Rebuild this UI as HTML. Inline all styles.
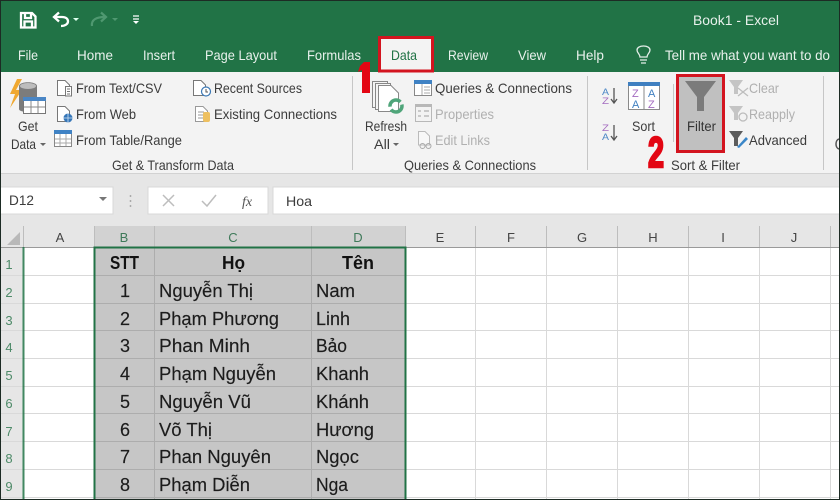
<!DOCTYPE html>
<html>
<head>
<meta charset="utf-8">
<style>
html,body{margin:0;padding:0;background:#fff;width:840px;height:500px;overflow:hidden}
svg{display:block;filter:blur(.35px)}
text{font-family:"Liberation Sans",sans-serif}
.r{font-size:14px;fill:#3c3c3c}
.d{font-size:14px;fill:#b0b0b0}
.t{font-size:14px;fill:#e8f1ec}
.c{font-size:18px;fill:#1c1c1c;stroke:#1c1c1c;stroke-width:.15}
.b{font-size:18px;fill:#111;font-weight:bold}
.h{font-size:13px;fill:#444}
.g{font-size:13px;fill:#3f7a5a}
.n{font-size:13px;fill:#4d8a68}
.a{font-size:43px;font-weight:bold;fill:#e30613;stroke:#e30613;stroke-width:2.400}
</style>
</head>
<body>
<svg width="840" height="500" viewBox="0 0 840 500" xmlns="http://www.w3.org/2000/svg">
<rect width="840" height="500" fill="#fff"/>
<!-- title and tab bar -->
<rect width="840" height="72" fill="#217346"/>
<!-- QAT -->
<g fill="none" stroke="#fff" stroke-width="2.300">
<path d="M21 13H32L35.500 16.500V27.500H21Z"/>
<path d="M25 14V18H31V14M24.500 27V21.500H32V27"/>
<path d="M55 17H62C66 17 68 19 68 21.500C68 24 65 26 61 26"/>
<path d="M59 12.500L54 17L59 21.500"/>
</g>
<path d="M73 18h6l-3 3z" fill="#dfe"/>
<g fill="none" stroke="#4f9870" stroke-width="2.200">
<path d="M92 26C91 20 96 17 105 17"/>
<path d="M101 12.500L106 17L101 21.500"/>
</g>
<path d="M112 18h6l-3 3z" fill="#4f9870"/>
<path d="M133 16h6M133 19h6" stroke="#fff" stroke-width="1.200"/><path d="M133 21h6l-3 3z" fill="#fff"/>
<text class="t" x="693" y="25" textLength="86" lengthAdjust="spacingAndGlyphs">Book1  -  Excel</text>
<!-- tabs -->
<text class="t" x="18" y="60" textLength="20" lengthAdjust="spacingAndGlyphs">File</text>
<text class="t" x="77" y="60" textLength="36" lengthAdjust="spacingAndGlyphs">Home</text>
<text class="t" x="143" y="60" textLength="32" lengthAdjust="spacingAndGlyphs">Insert</text>
<text class="t" x="205" y="60" textLength="72" lengthAdjust="spacingAndGlyphs">Page Layout</text>
<text class="t" x="307" y="60" textLength="54" lengthAdjust="spacingAndGlyphs">Formulas</text>
<text class="t" x="448" y="60" textLength="40" lengthAdjust="spacingAndGlyphs">Review</text>
<text class="t" x="518" y="60" textLength="28" lengthAdjust="spacingAndGlyphs">View</text>
<text class="t" x="576" y="60" textLength="28" lengthAdjust="spacingAndGlyphs">Help</text>
<text class="t" x="665" y="60" textLength="165" lengthAdjust="spacingAndGlyphs">Tell me what you want to do</text>
<path d="M640 60h7M641 63h5M640 57C640 54 637 53 637 50C637 47.500 640 46 643.500 46C647 46 650 47.500 650 50C650 53 647 54 647 57Z" fill="none" stroke="#e3eee8" stroke-width="1.300"/>
<!-- ribbon -->
<rect y="72" width="840" height="102" fill="#f3f3f3"/>
<rect y="174" width="840" height="52" fill="#e6e6e6"/>
<rect y="173" width="840" height="1" fill="#d2d2d2"/>
<!-- data tab -->
<rect x="379.500" y="37.500" width="53" height="33.500" fill="#f3f3f3" stroke="#d3141f" stroke-width="3"/>
<text x="391" y="60" font-size="14" fill="#217346" textLength="26" lengthAdjust="spacingAndGlyphs">Data</text>
<!-- separators -->
<g fill="#c6c6c6">
<rect x="352" y="76" width="1" height="94"/>
<rect x="587" y="76" width="1" height="94"/>
<rect x="823" y="76" width="1" height="94"/>
<rect x="673" y="84" width="1" height="58"/>
</g>
<!-- Get Data icon -->
<path d="M17 79L10 94H15L10 108L22 90H16L22 79Z" fill="#f0a830"/>
<path d="M19 86C19 81 37 81 37 86V109C37 113 19 113 19 109Z" fill="#7c7c7c"/>
<ellipse cx="28" cy="86" rx="8" ry="3" fill="#bdbdbd"/>
<rect x="23.500" y="97.500" width="22" height="16" fill="#fff" stroke="#777"/>
<rect x="23" y="97" width="23" height="4" fill="#4a86c5"/>
<path d="M31 101V113M38 101V113M24 107H45" stroke="#888"/>
<text class="r" x="18" y="131" textLength="20" lengthAdjust="spacingAndGlyphs">Get</text>
<text class="r" x="11" y="149" textLength="25" lengthAdjust="spacingAndGlyphs">Data</text>
<path d="M40 143h6l-3 3z" fill="#666"/>
<!-- From Text -->
<g fill="#fff" stroke="#777">
<path d="M57.500 80.500H65L69.500 85V95.500H57.500Z"/>
<rect x="65.500" y="86.500" width="6" height="9.500"/>
<path d="M57.500 106.500H65L69.500 111V121.500H57.500Z"/>
</g>
<path d="M67 89h3M67 91.500h3M67 94h3" stroke="#777"/>
<circle cx="68" cy="118" r="4.500" fill="#3576b8"/>
<path d="M63.500 118h9M68 113.500v9" stroke="#cfe2f3" stroke-width=".8"/>
<rect x="54.500" y="131.500" width="17" height="15" fill="#fff" stroke="#888"/>
<rect x="54" y="130" width="18" height="4" fill="#3f82c4"/>
<path d="M60 134V146M66 134V146M55 139H71M55 143H71" stroke="#aaa"/>
<text class="r" x="76" y="93" textLength="86" lengthAdjust="spacingAndGlyphs">From Text/CSV</text>
<text class="r" x="76" y="119" textLength="60" lengthAdjust="spacingAndGlyphs">From Web</text>
<text class="r" x="76" y="145" textLength="106" lengthAdjust="spacingAndGlyphs">From Table/Range</text>
<!-- Recent -->
<path d="M193.500 80.500H201L205.500 85V95.500H193.500Z" fill="#fff" stroke="#777"/>
<circle cx="206" cy="91.500" r="4.500" fill="#fff" stroke="#3b78b5" stroke-width="1.200"/>
<path d="M206 89v3h2" stroke="#555" fill="none"/>
<path d="M195.500 106.500H203L207.500 111V121.500H195.500Z" fill="#fff" stroke="#999"/>
<path d="M198 112h6M198 115h6M198 118h6" stroke="#999"/>
<rect x="203" y="112" width="7" height="10" rx="2" fill="#eec060"/>
<text class="r" x="214" y="93" textLength="88" lengthAdjust="spacingAndGlyphs">Recent Sources</text>
<text class="r" x="214" y="119" textLength="123" lengthAdjust="spacingAndGlyphs">Existing Connections</text>
<text class="r" x="112" y="170" textLength="122" lengthAdjust="spacingAndGlyphs">Get &amp; Transform Data</text>
<!-- Refresh -->
<g fill="#f5f5f5" stroke="#888">
<rect x="372.500" y="81.500" width="15" height="26"/>
<rect x="375.500" y="83.500" width="15" height="26"/>
</g>
<path d="M378.500 85.500H391L398.500 93V111.500H378.500Z" fill="#fff" stroke="#888"/>
<circle cx="396" cy="106" r="6" fill="none" stroke="#4fa57a" stroke-width="3.500" stroke-dasharray="15 3"/>
<text class="r" x="365" y="131" textLength="42" lengthAdjust="spacingAndGlyphs">Refresh</text>
<text class="r" x="374" y="149" textLength="16" lengthAdjust="spacingAndGlyphs">All</text>
<path d="M393 143h6l-3 3z" fill="#666"/>
<!-- Queries icons -->
<rect x="414.500" y="80.500" width="17" height="15" fill="#fff" stroke="#888"/>
<rect x="414" y="80" width="18" height="4" fill="#3f82c4"/>
<path d="M422 84V95M424 87h6M424 90h6M424 93h6" stroke="#aaa"/>
<rect x="415.500" y="105.500" width="16" height="16" fill="#f3f3f3" stroke="#b8b8b8"/>
<rect x="415" y="104" width="17" height="3" fill="#b8b8b8"/>
<path d="M418 111h3M418 116h3M424 111h5M424 116h5" stroke="#b0b0b0" stroke-width="1.300"/>
<path d="M418.500 131.500H425L429.500 136V145H418.500Z" fill="#f7f7f7" stroke="#bbb"/>
<path d="M420 146a2.500 2.500 0 0 1 5 0a2.500 2.500 0 0 1-5 0M426 146a2.500 2.500 0 0 1 5 0a2.500 2.500 0 0 1-5 0" fill="none" stroke="#aaa"/>
<text class="r" x="435" y="93" textLength="137" lengthAdjust="spacingAndGlyphs">Queries &amp; Connections</text>
<text class="d" x="435" y="119" textLength="59" lengthAdjust="spacingAndGlyphs">Properties</text>
<text class="d" x="435" y="145" textLength="55" lengthAdjust="spacingAndGlyphs">Edit Links</text>
<text class="r" x="404" y="170" textLength="132" lengthAdjust="spacingAndGlyphs">Queries &amp; Connections</text>
<!-- Sort -->
<text x="602" y="95" font-size="9" fill="#4a86c5" textLength="7" lengthAdjust="spacingAndGlyphs">A</text>
<text x="602" y="104" font-size="9" fill="#a46cc0" textLength="7" lengthAdjust="spacingAndGlyphs">Z</text>
<path d="M614 88V102M611 99L614 103L617 99" stroke="#555" stroke-width="1.300" fill="none"/>
<text x="602" y="131" font-size="9" fill="#a46cc0" textLength="7" lengthAdjust="spacingAndGlyphs">Z</text>
<text x="602" y="140" font-size="9" fill="#4a86c5" textLength="7" lengthAdjust="spacingAndGlyphs">A</text>
<path d="M614 125V139M611 136L614 140L617 136" stroke="#555" stroke-width="1.300" fill="none"/>
<rect x="628.500" y="82.500" width="31" height="27" fill="#fff" stroke="#8a8a8a"/>
<rect x="628" y="82" width="32" height="4" fill="#3f7fc0"/>
<path d="M644 86V110" stroke="#8a8a8a"/>
<g font-size="11">
<text x="632" y="97" fill="#a46cc0">Z</text><text x="648" y="97" fill="#3f7fc0">A</text>
<text x="632" y="108" fill="#3f7fc0">A</text><text x="648" y="108" fill="#a46cc0">Z</text>
</g>
<text class="r" x="632" y="131" textLength="23" lengthAdjust="spacingAndGlyphs">Sort</text>
<!-- Filter -->
<rect x="677.500" y="75.500" width="46" height="76" fill="#c0c0c0" stroke="#d3141f" stroke-width="3"/>
<path d="M685 81H716L704 97V111H697V97Z" fill="#7b7b7b"/>
<text x="687" y="131" font-size="14" fill="#333" textLength="29" lengthAdjust="spacingAndGlyphs">Filter</text>
<!-- Clear etc -->
<path d="M729 80H743L738 87V94H734V87Z" fill="#c4c4c4"/>
<path d="M738 88L748 96M748 88L738 96" stroke="#bdbdbd" stroke-width="1.300"/>
<path d="M729 106H743L738 113V120H734V113Z" fill="#c4c4c4"/>
<circle cx="743" cy="117" r="4" fill="none" stroke="#bbb" stroke-width="1.300"/>
<path d="M729 131H743L738 138V146H734V138Z" fill="#5c5c5c"/>
<path d="M737 147L746 137L748 139L739 148Z" fill="#3a86c8"/>
<text class="d" x="749" y="93" textLength="30" lengthAdjust="spacingAndGlyphs">Clear</text>
<text class="d" x="749" y="119" textLength="46" lengthAdjust="spacingAndGlyphs">Reapply</text>
<text class="r" x="749" y="145" textLength="58" lengthAdjust="spacingAndGlyphs">Advanced</text>
<text class="r" x="671" y="170" textLength="69" lengthAdjust="spacingAndGlyphs">Sort &amp; Filter</text>
<path d="M839 139C835 140 835 148 839 149" fill="none" stroke="#555" stroke-width="1.500"/>
<!-- annotations -->
<path d="M360 66L364 62H370V93H362V70L358 72Z" fill="#e30613"/>
<text class="a" x="648" y="167" textLength="16" lengthAdjust="spacingAndGlyphs">2</text>
<!-- formula bar -->
<rect x="0" y="187" width="113" height="27" fill="#fff" stroke="#d8d8d8"/>
<text class="r" x="9" y="205" textLength="25" lengthAdjust="spacingAndGlyphs">D12</text>
<path d="M99 197h8l-4 4z" fill="#777"/>
<path d="M130.500 195v2M130.500 200v2M130.500 205v2" stroke="#aaa" stroke-width="1.500"/>
<rect x="148" y="187" width="120" height="27" fill="#fff" stroke="#d8d8d8"/>
<path d="M163 195L174 206M174 195L163 206" stroke="#bdbdbd" stroke-width="1.500"/>
<path d="M202 201L207 206L216 195" fill="none" stroke="#bdbdbd" stroke-width="1.500"/>
<text x="242" y="206" font-size="14" fill="#555" style="font-family:'Liberation Serif',serif;font-style:italic">fx</text>
<rect x="273" y="187" width="570" height="27" fill="#fff" stroke="#d8d8d8"/>
<text class="r" x="286" y="206" textLength="26" lengthAdjust="spacingAndGlyphs">Hoa</text>
<!-- sheet header -->
<rect x="0" y="226" width="840" height="22" fill="#e6e6e6"/>
<rect x="0" y="248" width="23" height="252" fill="#e6e6e6"/>
<rect x="94" y="226" width="311" height="21" fill="#d2d2d2"/>
<path d="M7 245L20 232V245Z" fill="#b9b9b9"/>
<g stroke="#bdbdbd">
<path d="M23.500 226V247M94.500 226V247M154.500 226V247M311.500 226V247M405.500 226V247M475.500 226V247M546.500 226V247M617.500 226V247M688.500 226V247M759.500 226V247M830.500 226V247"/>
<path d="M0 247.500H840" stroke="#9a9a9a"/>
</g>
<g text-anchor="middle">
<text class="h" x="60" y="242">A</text>
<text class="g" x="124" y="242">B</text>
<text class="g" x="233" y="242">C</text>
<text class="g" x="358" y="242">D</text>
<text class="h" x="440" y="242">E</text>
<text class="h" x="511" y="242">F</text>
<text class="h" x="582" y="242">G</text>
<text class="h" x="653" y="242">H</text>
<text class="h" x="723" y="242">I</text>
<text class="h" x="794" y="242">J</text>
<text class="n" x="9" y="269">1</text>
<text class="n" x="9" y="297">2</text>
<text class="n" x="9" y="325">3</text>
<text class="n" x="9" y="352">4</text>
<text class="n" x="9" y="380">5</text>
<text class="n" x="9" y="408">6</text>
<text class="n" x="9" y="436">7</text>
<text class="n" x="9" y="463">8</text>
<text class="n" x="9" y="491">9</text>
</g>
<!-- selection fill -->
<rect x="94" y="248" width="312" height="252" fill="#c6c6c6"/>
<!-- gridlines -->
<g stroke="#d9d9d9">
<path d="M0 275.500H94M406 275.500H840M0 303.500H94M406 303.500H840M0 330.500H94M406 330.500H840M0 358.500H94M406 358.500H840M0 386.500H94M406 386.500H840M0 413.500H94M406 413.500H840M0 441.500H94M406 441.500H840M0 469.500H94M406 469.500H840M0 497.500H94M406 497.500H840"/>
<path d="M475.500 248V500M546.500 248V500M617.500 248V500M688.500 248V500M759.500 248V500M830.500 248V500"/>
</g>
<g stroke="#adadad">
<path d="M94 275.500H406M94 303.500H406M94 330.500H406M94 358.500H406M94 386.500H406M94 413.500H406M94 441.500H406M94 469.500H406M94 497.500H406"/>
<path d="M154.500 248V500M311.500 248V500"/>
</g>
<!-- row header edge -->
<rect x="22.500" y="247" width="2" height="253" fill="#217346" opacity=".85"/>
<!-- selection border -->
<path d="M94.500 500V247.500H405.500V500" fill="none" stroke="#217346" stroke-width="2"/>
<!-- cell text -->
<g text-anchor="middle">
<text class="b" x="124.500" y="269" textLength="29" lengthAdjust="spacingAndGlyphs">STT</text>
<text class="b" x="233.500" y="269" textLength="23" lengthAdjust="spacingAndGlyphs">Họ</text>
<text class="b" x="358" y="269" textLength="32" lengthAdjust="spacingAndGlyphs">Tên</text>
<text class="c" x="125" y="297">1</text>
<text class="c" x="125" y="325">2</text>
<text class="c" x="125" y="352">3</text>
<text class="c" x="125" y="380">4</text>
<text class="c" x="125" y="408">5</text>
<text class="c" x="125" y="436">6</text>
<text class="c" x="125" y="463">7</text>
<text class="c" x="125" y="491">8</text>
</g>
<g>
<text class="c" x="159" y="297" textLength="94" lengthAdjust="spacingAndGlyphs">Nguyễn Thị</text>
<text class="c" x="159" y="325" textLength="120" lengthAdjust="spacingAndGlyphs">Phạm Phương</text>
<text class="c" x="159" y="352" textLength="91" lengthAdjust="spacingAndGlyphs">Phan Minh</text>
<text class="c" x="159" y="380" textLength="117" lengthAdjust="spacingAndGlyphs">Phạm Nguyễn</text>
<text class="c" x="159" y="408" textLength="92" lengthAdjust="spacingAndGlyphs">Nguyễn Vũ</text>
<text class="c" x="159" y="436" textLength="53" lengthAdjust="spacingAndGlyphs">Võ Thị</text>
<text class="c" x="159" y="463" textLength="112" lengthAdjust="spacingAndGlyphs">Phan Nguyên</text>
<text class="c" x="159" y="491" textLength="91" lengthAdjust="spacingAndGlyphs">Phạm Diễn</text>
<text class="c" x="316" y="297" textLength="39" lengthAdjust="spacingAndGlyphs">Nam</text>
<text class="c" x="316" y="325" textLength="34" lengthAdjust="spacingAndGlyphs">Linh</text>
<text class="c" x="316" y="352" textLength="31" lengthAdjust="spacingAndGlyphs">Bảo</text>
<text class="c" x="316" y="380" textLength="53" lengthAdjust="spacingAndGlyphs">Khanh</text>
<text class="c" x="316" y="408" textLength="53" lengthAdjust="spacingAndGlyphs">Khánh</text>
<text class="c" x="316" y="436" textLength="58" lengthAdjust="spacingAndGlyphs">Hương</text>
<text class="c" x="316" y="463" textLength="43" lengthAdjust="spacingAndGlyphs">Ngọc</text>
<text class="c" x="316" y="491" textLength="32" lengthAdjust="spacingAndGlyphs">Nga</text>
</g>
<!-- outer frame -->
<rect x=".5" y=".5" width="839" height="499" fill="none" stroke="#1d2b24"/>
</svg>
</body>
</html>
